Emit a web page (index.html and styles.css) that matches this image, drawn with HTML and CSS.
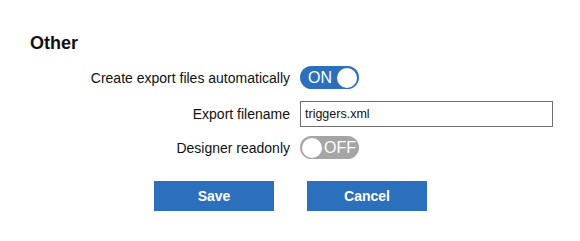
FILE: index.html
```html
<!DOCTYPE html>
<html>
<head>
<meta charset="utf-8">
<link rel="stylesheet" href="styles.css">
</head>
<body>
<div class="panel">
  <h2 class="title">Other</h2>
  <div class="row row-toggle">
    <label class="label">Create export files automatically</label>
    <span class="switch switch-on"><span class="switch-text">ON</span><span class="knob"></span></span>
  </div>
  <div class="row row-input">
    <label class="label">Export filename</label>
    <input class="text-input" type="text" value="triggers.xml">
  </div>
  <div class="row row-toggle">
    <label class="label">Designer readonly</label>
    <span class="switch switch-off"><span class="knob"></span><span class="switch-text">OFF</span></span>
  </div>
  <div class="actions">
    <button class="btn">Save</button>
    <button class="btn">Cancel</button>
  </div>
</div>
</body>
</html>
```
FILE: styles.css
```css
html, body {
  margin: 0;
  padding: 0;
  background: #ffffff;
}
body {
  font-family: "Liberation Sans", Arial, sans-serif;
  color: #111;
  width: 580px;
  height: 241px;
}
.panel {
  padding: 33px 0 0 30px;
}
.title {
  margin: 0;
  font-size: 18px;
  font-weight: bold;
  line-height: 20px;
  color: #111;
}
.row {
  display: flex;
  align-items: center;
}
.row-toggle {
  height: 23px;
}
.row:first-of-type, .title + .row {
  margin-top: 13px;
}
.row-input {
  height: 26px;
  margin: 12px 0 9px;
}
.label {
  width: 260px;
  text-align: right;
  font-size: 14px;
  margin-right: 10px;
  color: #111;
}
.switch {
  box-sizing: border-box;
  width: 59px;
  height: 23px;
  border-radius: 12px;
  display: flex;
  align-items: center;
  padding: 0 2px;
  color: #fff;
  font-size: 16px;
}
.switch-on {
  background: #2c6fbc;
  justify-content: space-between;
  padding-left: 8px;
}
.switch-off {
  background: #a5a5a5;
  justify-content: space-between;
  padding-right: 3px;
}
.switch-text {
  line-height: 23px;
}
.knob {
  width: 20px;
  height: 20px;
  border-radius: 50%;
  background: #fff;
}
.text-input {
  box-sizing: border-box;
  width: 253px;
  height: 26px;
  border: 1px solid #6f6f6f;
  padding: 0 4px;
  margin: 0;
  font-family: "Liberation Sans", Arial, sans-serif;
  font-size: 12.5px;
  color: #111;
  outline: none;
}
.actions {
  display: flex;
  gap: 33px;
  margin-top: 22px;
  padding-left: 124px;
}
.btn {
  width: 120px;
  height: 30px;
  border: none;
  background: #2c6fbc;
  color: #fff;
  font-family: "Liberation Sans", Arial, sans-serif;
  font-weight: bold;
  font-size: 14px;
  padding: 0;
  cursor: pointer;
}
```
